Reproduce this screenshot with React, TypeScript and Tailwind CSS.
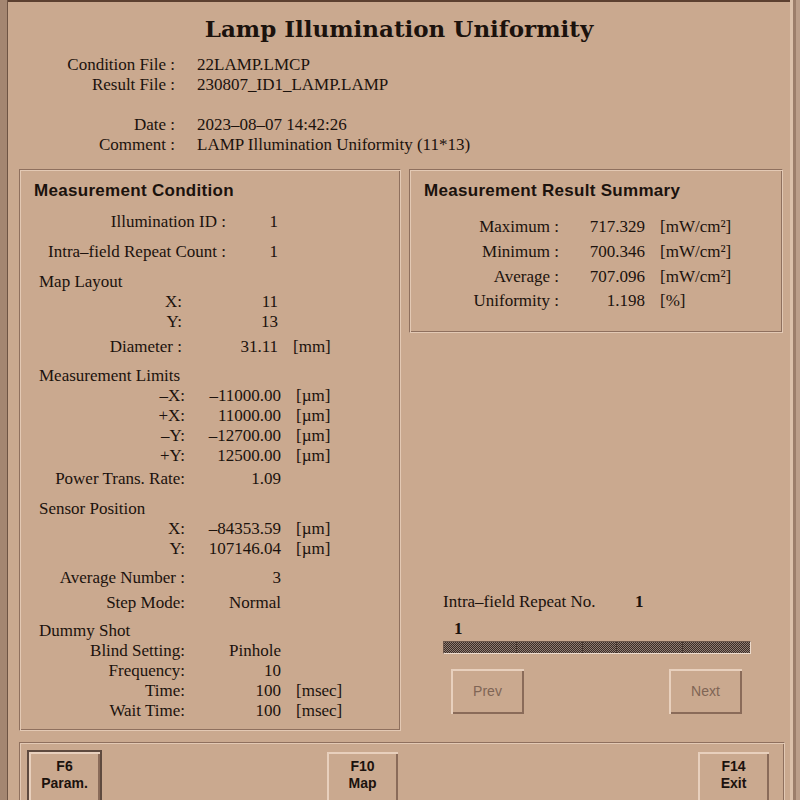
import React from 'react';

const serif = "font-['Liberation_Serif',serif]";
const sans = "font-['Liberation_Sans',Arial,sans-serif]";

// etched-in frame used by the Motif panels
const groove =
  'border border-t-[#8f705e] border-l-[#8f705e] border-b-[#e3c9b4] border-r-[#e3c9b4] shadow-[inset_1px_1px_0_#e3c9b4,inset_-1px_-1px_0_#8f705e]';

const raised =
  'shadow-[inset_2px_2px_0_#e8d0bd,inset_-2px_-2px_0_#8a6b59] bg-[#caa98f]';

interface RowProps {
  label: string;
  value?: string;
  unit?: string;
  lw: string;
  vw: string;
  className?: string;
}

function Row({ label, value, unit, lw, vw, className = '' }: RowProps) {
  return (
    <div className={`flex h-[20px] leading-[20px] whitespace-nowrap ${className}`}>
      <span className={`${lw} text-right`}>{label}</span>
      <span className={`${vw} text-right`}>{value}</span>
      {unit && <span className="ml-[15px]">{unit}</span>}
    </div>
  );
}

function Heading({ text, className = '' }: { text: string; className?: string }) {
  return <div className={`h-[20px] leading-[20px] pl-[19px] ${className}`}>{text}</div>;
}

function FKey({ fn, label, focused }: { fn: string; label: string; focused?: boolean }) {
  return (
    <div className={focused ? 'p-[2px] bg-[#5e4a3f]' : 'p-[2px]'}>
      <div className={`${raised} w-[71px] h-[56px] flex flex-col items-center pt-[6px] ${sans} font-bold text-[14px] leading-[17px] text-[#1b120d]`}>
        <span>{fn}</span>
        <span>{label}</span>
      </div>
    </div>
  );
}

function PushButton({ label }: { label: string }) {
  return (
    <div className={`${raised} w-[73px] h-[45px] flex items-center justify-center ${sans} text-[14px] text-[#7f6555]`}>
      {label}
    </div>
  );
}

export default function App() {
  const cw = 'w-[206px]';
  const mw = 'w-[162px]';
  const lw = 'w-[165px]';

  return (
    <div className={`w-[800px] h-[800px] overflow-hidden flex bg-[#caa98f] text-[#1b120d] ${serif} text-[17px]`}>
      {/* window edge */}
      <div className="w-[8px] bg-[#a48671] border-r border-[#6e5444] shrink-0" />

      <div className="flex-1 flex flex-col border-t-2 border-[#5c4030]">
        <div className="shrink-0 text-center mt-[11px] h-[32px] leading-[32px] font-['DejaVu_Serif',serif] font-bold text-[23px]">
          Lamp Illumination Uniformity
        </div>

        {/* file info */}
        <div className="shrink-0 mt-[10px] flex flex-col">
          {[
            ['Condition File :', '22LAMP.LMCP', ''],
            ['Result File :', '230807_ID1_LAMP.LAMP', ''],
            ['Date :', '2023–08–07 14:42:26', 'mt-[20px]'],
            ['Comment :', 'LAMP Illumination Uniformity (11*13)', ''],
          ].map(([k, v, m]) => (
            <div key={k} className={`flex h-[20px] leading-[20px] ${m}`}>
              <span className="w-[167px] text-right">{k}</span>
              <span className="ml-[22px]">{v}</span>
            </div>
          ))}
        </div>

        <div className="shrink-0 mt-[14px] flex h-[562px] ml-[11px]">
          {/* Measurement Condition */}
          <div className={`${groove} w-[382px] flex flex-col pt-[11px]`}>
            <div className={`h-[20px] leading-[20px] pl-[14px] ${sans} font-bold text-[17px] tracking-[0.3px]`}>
              Measurement Condition
            </div>
            <Row label="Illumination ID :" value="1" lw={cw} vw="w-[52px]" className="mt-[11px]" />
            <Row label="Intra–field Repeat Count :" value="1" lw={cw} vw="w-[52px]" className="mt-[10px]" />
            <Heading text="Map Layout" className="mt-[10px]" />
            <Row label="X:" value="11" lw={mw} vw="w-[96px]" />
            <Row label="Y:" value="13" lw={mw} vw="w-[96px]" />
            <Row label="Diameter :" value="31.11" unit="[mm]" lw={mw} vw="w-[96px]" className="mt-[5px]" />
            <Heading text="Measurement Limits" className="mt-[9px]" />
            <Row label="–X:" value="–11000.00" unit="[µm]" lw={lw} vw="w-[96px]" />
            <Row label="+X:" value="11000.00" unit="[µm]" lw={lw} vw="w-[96px]" />
            <Row label="–Y:" value="–12700.00" unit="[µm]" lw={lw} vw="w-[96px]" />
            <Row label="+Y:" value="12500.00" unit="[µm]" lw={lw} vw="w-[96px]" />
            <Row label="Power Trans. Rate:" value="1.09" lw={lw} vw="w-[96px]" className="mt-[3px]" />
            <Heading text="Sensor Position" className="mt-[10px]" />
            <Row label="X:" value="–84353.59" unit="[µm]" lw={lw} vw="w-[96px]" />
            <Row label="Y:" value="107146.04" unit="[µm]" lw={lw} vw="w-[96px]" />
            <Row label="Average Number :" value="3" lw={lw} vw="w-[96px]" className="mt-[9px]" />
            <Row label="Step Mode:" value="Normal" lw={lw} vw="w-[96px]" className="mt-[5px]" />
            <Heading text="Dummy Shot" className="mt-[8px]" />
            <Row label="Blind Setting:" value="Pinhole" lw={lw} vw="w-[96px]" />
            <Row label="Frequency:" value="10" lw={lw} vw="w-[96px]" />
            <Row label="Time:" value="100" unit="[msec]" lw={lw} vw="w-[96px]" />
            <Row label="Wait Time:" value="100" unit="[msec]" lw={lw} vw="w-[96px]" />
          </div>

          <div className="ml-[8px] w-[374px] flex flex-col">
            {/* Result summary */}
            <div className={`${groove} h-[164px] flex flex-col pt-[11px]`}>
              <div className={`h-[20px] leading-[20px] pl-[14px] ${sans} font-bold text-[17px] tracking-[0.3px]`}>
                Measurement Result Summary
              </div>
              <Row label="Maximum :" value="717.329" unit="[mW/cm²]" lw="w-[149px]" vw="w-[86px]" className="mt-[16px]" />
              <Row label="Minimum :" value="700.346" unit="[mW/cm²]" lw="w-[149px]" vw="w-[86px]" className="mt-[5px]" />
              <Row label="Average :" value="707.096" unit="[mW/cm²]" lw="w-[149px]" vw="w-[86px]" className="mt-[5px]" />
              <Row label="Uniformity :" value="1.198" unit="[%]" lw="w-[149px]" vw="w-[86px]" className="mt-[4px]" />
            </div>

            {/* repeat selector */}
            <div className="flex-1 flex flex-col justify-end pb-[17px] pl-[34px]">
              <div className="flex h-[20px] leading-[20px]">
                <span className="w-[192px]">Intra–field Repeat No.</span>
                <span className="font-bold">1</span>
              </div>
              <div className="h-[20px] leading-[20px] pl-[11px] mt-[7px] font-bold">1</div>
              <div className="mt-[2px] w-[308px] h-[13px] flex border-t border-l border-[#6d574b] border-b border-b-[#eddbcc] border-r border-r-[#eddbcc] bg-[image:repeating-conic-gradient(#3a2c26_0%_25%,#8f7c72_0%_50%)] bg-[length:2px_2px]">
                <div className="w-[73px] border-r border-[#4a3a33]" />
                <div className="w-[66px] border-r border-[#4a3a33]" />
                <div className="w-[34px] border-r border-[#4a3a33]" />
                <div className="w-[66px] border-r border-[#4a3a33]" />
              </div>
              <div className="mt-[15px] flex w-[299px] justify-between pl-[8px]">
                <PushButton label="Prev" />
                <PushButton label="Next" />
              </div>
            </div>
          </div>
        </div>

        {/* function keys */}
        <div className={`${groove} shrink-0 mt-[11px] ml-[11px] mr-[5px] h-[80px] flex pt-[7px] pl-[7px]`}>
          <FKey fn="F6" label="Param." focused />
          <div className="ml-[223px]">
            <FKey fn="F10" label="Map" />
          </div>
          <div className="ml-[296px]">
            <FKey fn="F14" label="Exit" />
          </div>
        </div>
      </div>

      {/* right window edge */}
      <div className="w-[10px] flex shrink-0">
        <div className="w-[3px] bg-[#dcc1ab]" />
        <div className="w-[3px] bg-[#9c7e6b]" />
        <div className="flex-1 bg-[#bb9e8a]" />
      </div>
    </div>
  );
}
